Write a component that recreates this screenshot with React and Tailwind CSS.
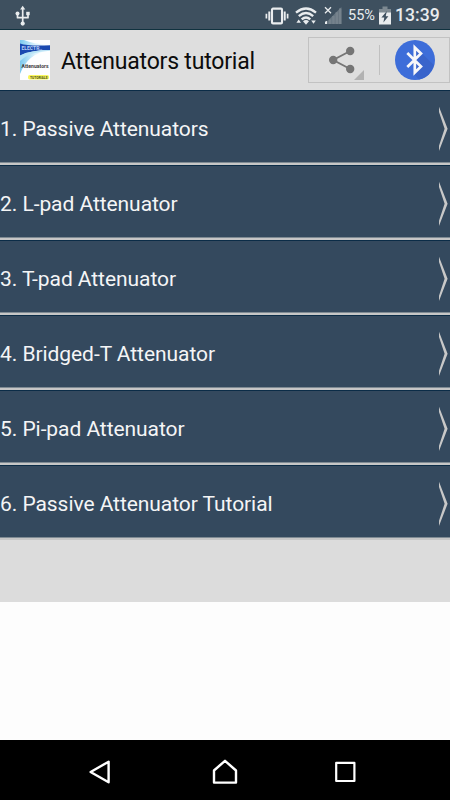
const chapters = [
    'Passive Attenuators',
    'L-pad Attenuator',
    'T-pad Attenuator',
    'Bridged-T Attenuator',
    'Pi-pad Attenuator',
    'Passive Attenuator Tutorial',
];

function UsbIcon() {
    return (
        <svg width="16" height="22" viewBox="0 0 16 22" fill="none" stroke="#e9ecee" strokeWidth="1.7">
            <path d="M7.7 3v16M2.5 8.5v4.2h10.5V8.5" strokeLinejoin="round" />
            <path d="M7.7 0.8l2.6 3.6H5.1z" fill="#e9ecee" stroke="none" />
            <circle cx="7.7" cy="18.6" r="2.1" fill="#e9ecee" stroke="none" />
            <circle cx="2.5" cy="8.6" r="2" fill="#e9ecee" stroke="none" />
            <path d="M11.2 6.8h3.5v3.4h-3.5z" fill="#e9ecee" stroke="none" />
        </svg>
    );
}

function VibrateIcon() {
    return (
        <svg width="24" height="18" viewBox="0 0 24 18" fill="none" stroke="#e9ecee">
            <rect x="7" y="1.6" width="10" height="14.8" rx="1" strokeWidth="2.1" />
            <path d="M4.3 4.5v9M19.7 4.5v9" strokeWidth="2" />
            <path d="M1.4 6.7v4.8M22.6 6.7v4.8" strokeWidth="1.7" />
        </svg>
    );
}

function WifiIcon() {
    return (
        <svg width="22" height="18" viewBox="0 0 22 18" fill="none" stroke="#e9ecee" strokeWidth="2.4">
            <path d="M1 5.6Q11 -2.4 21 5.6" />
            <path d="M3.8 9.1Q11 3.1 18.2 9.1" />
            <path d="M6.7 12.4Q11 8.6 15.3 12.4" />
            <path d="M8 14.2Q11 11.8 14 14.2L11 17.8z" fill="#e9ecee" stroke="none" />
            <path d="M1.4 15.8h4.6L3.7 12.6zM16.2 13.6h4.6l-2.3 3.2z" fill="#e9ecee" stroke="none" />
        </svg>
    );
}

function SignalIcon() {
    return (
        <svg width="18" height="19" viewBox="0 0 18 19">
            <path d="M17.4 1v17H3.8v-3.2z" fill="#677681" />
            <path d="M5 13.5h2.3V18H5zM8.2 10h2.5v8H8.2zM11.6 6.3h2.5V18h-2.5zM15 2.6h2.4V18H15z" fill="#75828c" />
            <path d="M1 15.8l2.2-1V18H1z" fill="#e9ecee" />
            <path d="M1 1.3l6 6M7 1.3l-6 6" stroke="#e9ecee" strokeWidth="1.3" />
        </svg>
    );
}

function BatteryIcon() {
    return (
        <svg width="12" height="19" viewBox="0 0 12 19">
            <path d="M3.5 0.5h5V3H12v4H0V3h3.5z" fill="#7d8991" />
            <path d="M0 6.5h12v12H0z" fill="#e9ecee" />
            <path d="M7.9 5L2.4 11.4h2.9l-.9 5.1 5-6.2H6.7z" fill="#3e505f" />
        </svg>
    );
}

function AppLogo() {
    return (
        <svg className="overflow-visible" width="30" height="40" viewBox="0 0 30 40">
            <defs>
                <linearGradient id="cover" x1="0" y1="0" x2="1" y2="0">
                    <stop offset="0" stopColor="#7cc9ee" />
                    <stop offset="0.5" stopColor="#dcf3fd" />
                    <stop offset="1" stopColor="#ffffff" />
                </linearGradient>
            </defs>
            <rect width="30" height="40" fill="#fdfeff" />
            <path d="M0 0h4Q13 4 30 5v5Q8 13 0 34z" fill="url(#cover)" />
            <path d="M0 3.5Q9 6.4 30 5.2v4.8Q11 10 0 15.5z" fill="#1b49b0" />
            <path d="M0 15.5Q10 10 30 10v.8Q10 11.5 0 21z" fill="#b9e4f6" />
            <rect x="8" y="35" width="21" height="4.6" rx="1.8" fill="#f8f65c" />
            <g fontFamily="Roboto, sans-serif" fontWeight="700">
                <text x="1.5" y="10.2" fontSize="5" fill="#b9cdf5">ELECTR..</text>
                <text x="1.5" y="28" fontSize="5.4" fill="#3a3a3a" textLength="27" lengthAdjust="spacingAndGlyphs">Attenuators</text>
                <text x="10" y="38.5" fontSize="3.7" fill="#4a4a20" textLength="17.5" lengthAdjust="spacingAndGlyphs">TUTORIALS</text>
            </g>
        </svg>
    );
}

function ShareIcon() {
    return (
        <svg width="26" height="28" viewBox="0 0 26 28" fill="#757575">
            <path d="M21.2 5L4.2 14l17 9" fill="none" stroke="#757575" strokeWidth="1.9" />
            <circle cx="21.2" cy="5" r="4.2" />
            <circle cx="4.2" cy="14" r="4.2" />
            <circle cx="21.2" cy="23" r="4.2" />
        </svg>
    );
}

function BluetoothIcon() {
    return (
        <svg width="40" height="40" viewBox="0 0 40 40">
            <circle cx="20" cy="20" r="20" fill="#3d6dd9" />
            <path d="M20 7l7 6.5L38.8 25A20 20 0 0 1 24 39.6L19 34z" fill="#3964cb" />
            <path d="M12.3 13L26 26.6l-6.2 5.9v-25l6.2 5.9L12.3 27" fill="none" stroke="#f7f7f9" strokeWidth="2.7" />
        </svg>
    );
}

export default function App() {
    return (
        <div className="flex h-[800px] w-[450px] flex-col overflow-hidden bg-[#fdfdfd] font-['Roboto',sans-serif]">
            <div className="flex h-[30px] shrink-0 items-center border-b border-[#10323f] bg-[#3e505f] pt-0.5 pl-[15px] text-[#e9ecee]">
                <UsbIcon />
                <div className="ml-auto flex items-center pr-[11px]">
                    <VibrateIcon />
                    <span className="ml-[6px]"><WifiIcon /></span>
                    <span className="ml-[7px]"><SignalIcon /></span>
                    <span className="ml-[6px] w-[27px] pt-px text-[14.5px] leading-none whitespace-nowrap">55%</span>
                    <span className="ml-[4px]"><BatteryIcon /></span>
                    <span className="ml-[4px] w-[44px] pt-px text-[17.6px] leading-none font-medium">13:39</span>
                </div>
            </div>

            <header className="flex h-[60px] shrink-0 items-center bg-[#dedede] pl-5">
                <AppLogo />
                <h1 className="ml-[11px] pt-[5px] text-[23px] tracking-[-0.2px] whitespace-nowrap text-[#0c0c0c]">Attenuators tutorial</h1>
                <div className="ml-auto flex h-[46px] w-[142px] items-center border border-[#c2c2c2]">
                    <div className="relative flex h-full w-[70px] items-center justify-center pr-[5px] pb-px">
                        <ShareIcon />
                        <svg className="absolute right-[15px] bottom-[2px]" width="10" height="10" viewBox="0 0 10 10">
                            <path d="M10 0v10H0z" fill="#b2b2b2" />
                        </svg>
                    </div>
                    <div className="h-[30px] w-px bg-[#c0c0c0]" />
                    <div className="ml-[15px]"><BluetoothIcon /></div>
                </div>
            </header>

            <main className="h-[512px] shrink-0 bg-[#dcdcdc]">
                <ul>
                    {chapters.map((title, i) => (
                        <li key={title} className="h-[75px] border-t border-[#0b2c47] bg-[#34495e]">
                            <div className="flex h-[74px] items-center justify-between border-b-2 border-[#c6c6c6]">
                                <div className="flex h-full w-full items-center justify-between border-b border-[#7f8b94] pt-[5px]">
                                    <span className="pt-[2px] text-[21px] tracking-[-0.06px] whitespace-nowrap text-[#f4f5f6]">{i + 1}. {title}</span>
                                    <svg className="mr-[2px]" width="10" height="46" viewBox="0 0 10 46">
                                        <path d="M1 0.8L9.6 22.8 1 45v-5.2L6.6 22.8 1 6z" fill="#c8c8c8" />
                                    </svg>
                                </div>
                            </div>
                        </li>
                    ))}
                </ul>
            </main>

            <nav className="mt-auto flex h-[60px] shrink-0 items-center justify-between bg-black pt-[3px] pr-[94px] pl-[88px]">
                <svg width="24" height="26" viewBox="0 0 24 26" fill="none" stroke="#ffffff" strokeWidth="2.4" strokeLinejoin="round">
                    <path d="M20.6 2.7v20.6L2.6 13z" />
                </svg>
                <svg className="ml-[3px]" width="26" height="26" viewBox="0 0 26 26" fill="none" stroke="#ffffff" strokeWidth="2.4" strokeLinejoin="round">
                    <path d="M2 11.5L13 1.8l11 9.7v12.1H2z" />
                </svg>
                <svg width="22" height="22" viewBox="0 0 22 22" fill="none" stroke="#ffffff" strokeWidth="2.2" strokeLinejoin="round">
                    <path d="M2.2 1.8h18.2v18.2H2.2z" />
                </svg>
            </nav>
        </div>
    );
}
